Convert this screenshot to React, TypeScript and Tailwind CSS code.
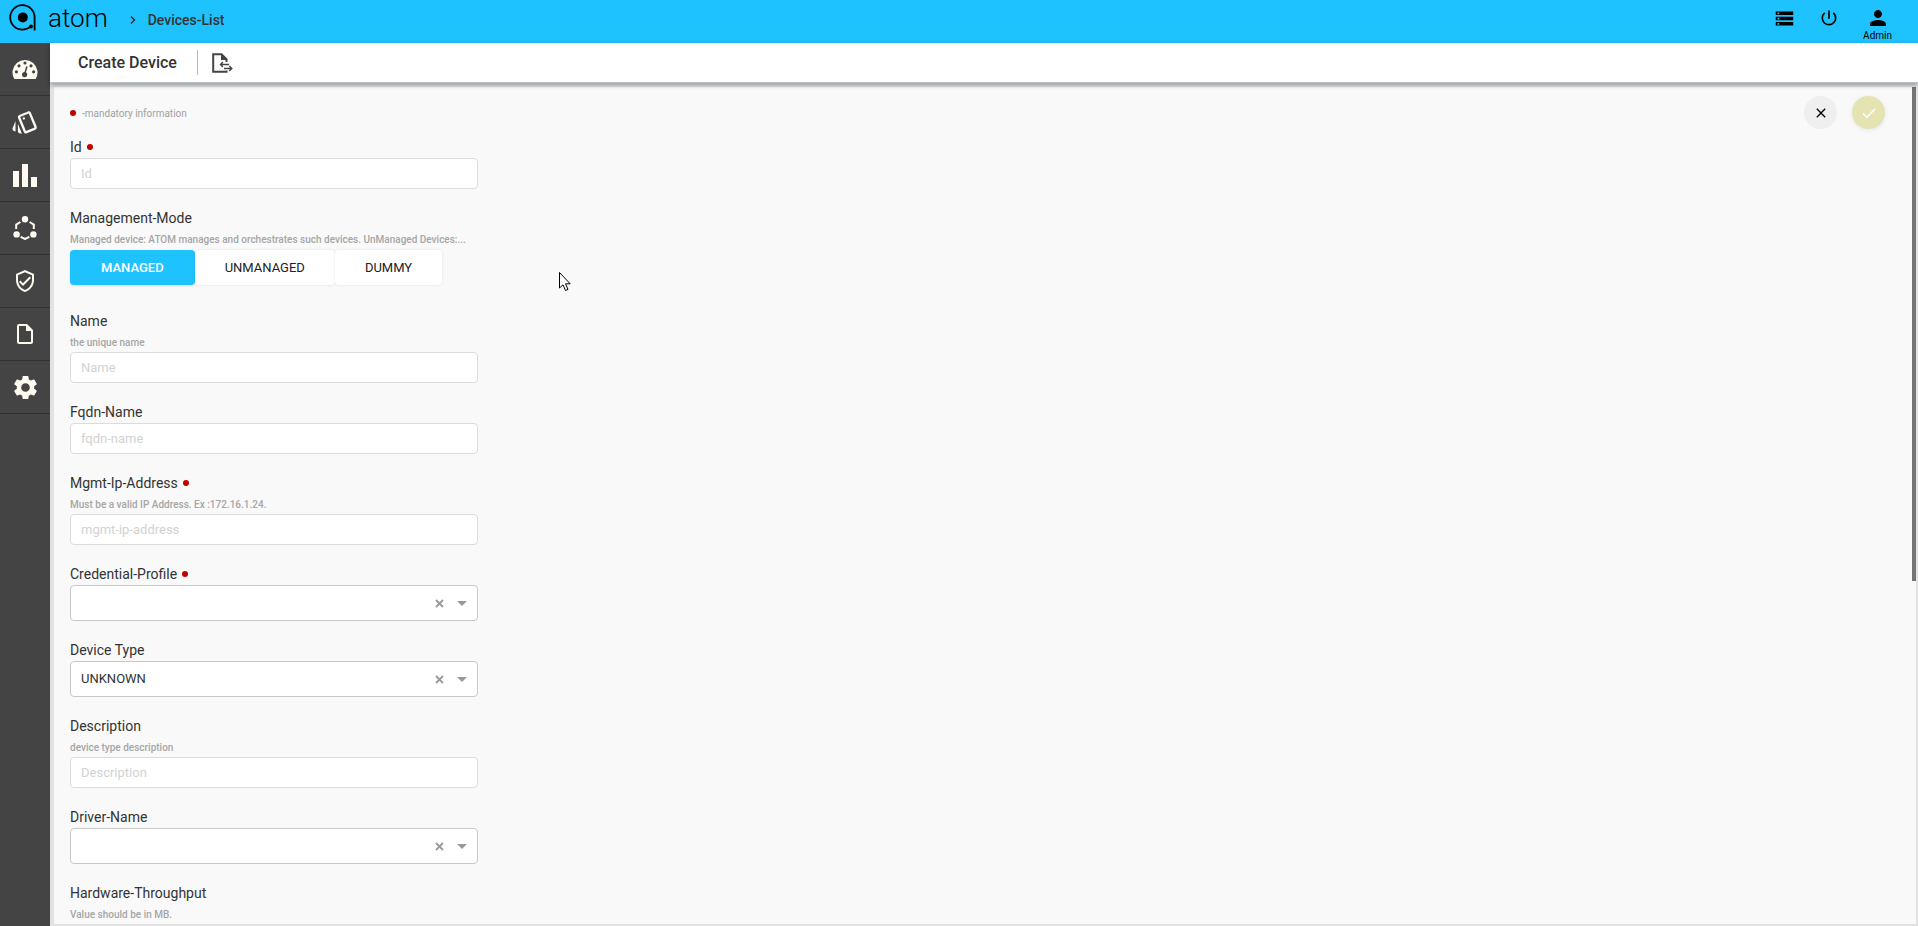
import { useState } from "react";
import type { ReactNode } from "react";
import {
    MdCheck,
    MdClose,
    MdOutlineInsertDriveFile,
    MdOutlineStyle,
    MdOutlineVerifiedUser,
    MdPerson,
    MdPowerSettingsNew,
    MdSettings,
    MdStorage,
} from "react-icons/md";

const Logo = () => (
    <svg width="28" height="28" viewBox="0 0 28 28" fill="none" aria-hidden="true">
        <path
            d="M25.6 13.2V26.4M25.6 13.2A12.2 12.2 0 1 0 13.4 25.6C17 25.6 19.4 24.6 21.8 22.4"
            stroke="#000"
            strokeWidth="1.8"
        />
        <circle cx="13.8" cy="13.4" r="5" fill="#000" />
        <circle cx="22" cy="22.6" r="2" fill="#000" />
    </svg>
);

const GaugeIcon = () => (
    <svg width="26" height="20" viewBox="0 0 26 20" aria-hidden="true">
        <path d="M2.4 20A12.5 12.5 0 1 1 23.6 20Z" fill="#fffaf0" />
        <g fill="#444">
            <circle cx="4.4" cy="12.8" r="1.6" />
            <circle cx="7" cy="6.8" r="1.6" />
            <circle cx="13" cy="4" r="1.6" />
            <circle cx="19" cy="6.8" r="1.6" />
            <circle cx="21.6" cy="12.8" r="1.6" />
            <circle cx="12.6" cy="15.6" r="2.6" />
        </g>
        <path d="M12.6 15L14.8 8" stroke="#444" strokeWidth="1.5" strokeLinecap="round" />
    </svg>
);

const BarsIcon = () => (
    <svg width="24" height="23" viewBox="0 0 24 23" fill="#fffaf0" aria-hidden="true">
        <path d="M0 7h6v16H0zM9 0h6v23H9zM18 13h6v10h-6z" />
    </svg>
);

const RingIcon = () => (
    <svg width="24" height="24" viewBox="0 0 24 24" aria-hidden="true">
        <g fill="#fffaf0">
            <circle cx="12" cy="3.2" r="3.2" />
            <circle cx="3.6" cy="18.4" r="3.2" />
            <circle cx="20.4" cy="18.4" r="3.2" />
        </g>
        <path
            d="M3.2 13V8.6L7.4 6M20.8 13V8.6L16.6 6M7.6 20.8L12 23L16.4 20.8"
            fill="none"
            stroke="#fffaf0"
            strokeWidth="2"
        />
    </svg>
);

const ExportIcon = () => (
    <svg width="21" height="21" viewBox="0 0 21 21" fill="none" aria-hidden="true">
        <path d="M14.5 17.5V18.8H1.2V1.2H9.5L14.5 6.2V9" stroke="#444" strokeWidth="2" />
        <path d="M9 0.5L15.5 7H9Z" fill="#444" />
        <path d="M9 11.5H17M10.8 9L8.5 11.5L10.8 14M12 15.5H19.5M17.2 13L19.8 15.5L17.2 18" stroke="#444" strokeWidth="1.4" />
    </svg>
);

const menu = [
    { name: "Dashboard", icon: <GaugeIcon /> },
    { name: "Resources", icon: <MdOutlineStyle size={28} /> },
    { name: "Reports", icon: <BarsIcon /> },
    { name: "Orchestration", icon: <RingIcon /> },
    { name: "Compliance", icon: <MdOutlineVerifiedUser size={24} /> },
    { name: "Documents", icon: <MdOutlineInsertDriveFile size={24} /> },
    { name: "Settings", icon: <MdSettings size={29} /> },
];

const Header = () => (
    <header className="flex h-[43px] shrink-0 items-center justify-between bg-[#1ec2ff] pr-[26px]">
        <div className="flex h-full items-center">
            <div className="flex items-center gap-[11px] pb-[7px] pl-[9px]">
                <Logo />
                <span className="text-[26px] leading-7 font-light text-black">atom</span>
            </div>
            <svg className="mt-[-4px] ml-[22px]" width="6" height="8" viewBox="0 0 6 8" aria-hidden="true">
                <path d="M1 0.5L4.5 4L1 7.5" fill="none" stroke="#222" strokeWidth="1.3" />
            </svg>
            <a href="#devices" className="ml-3 pb-1 text-sm leading-5 font-medium text-[#333]">
                Devices-List
            </a>
        </div>
        <div className="flex items-start gap-6 pt-1 text-black">
            <button type="button" aria-label="Servers" className="pt-[2px]">
                <MdStorage size={21} />
            </button>
            <button type="button" aria-label="Log out" className="pt-[2px]">
                <MdPowerSettingsNew size={20} />
            </button>
            <button type="button" className="flex flex-col items-center text-[10px] leading-3">
                <MdPerson size={24} />
                Admin
            </button>
        </div>
    </header>
);

const Sidebar = () => (
    <nav className="w-[50px] shrink-0 bg-[#444] text-[#fffaf0]">
        {menu.map((item) => (
            <a
                key={item.name}
                href="#menu"
                aria-label={item.name}
                className="flex h-[53px] items-center justify-center border-b border-[#303030]"
            >
                {item.icon}
            </a>
        ))}
    </nav>
);

const Dot = () => <span className="inline-block size-[6px] rounded-full bg-[#c00000]" />;

type FieldProps = {
    id: string;
    label: string;
    hint?: string;
    required?: boolean;
    children?: ReactNode;
};

const Field = ({ id, label, hint, required, children }: FieldProps) => (
    <div className="mb-[18px]">
        <label htmlFor={id} className="flex h-[22px] items-center gap-[5px] text-sm text-[#333]">
            {label}
            {required && <Dot />}
        </label>
        {hint && (
            <p className="h-5 text-[10px] leading-[22px] font-medium whitespace-nowrap text-[#a6a6a6]">{hint}</p>
        )}
        {children}
    </div>
);

const TextField = ({ placeholder, ...field }: FieldProps & { placeholder: string }) => (
    <Field {...field}>
        <input
            id={field.id}
            type="text"
            placeholder={placeholder}
            className="block h-[31px] w-full rounded border border-[#dcdcdc] bg-white px-[10px] text-[13px] text-[#333] placeholder:text-[#d2d2d2]"
        />
    </Field>
);

const SelectField = ({ value, ...field }: FieldProps & { value?: string }) => {
    const [current, setCurrent] = useState(value ?? "");

    return (
        <Field {...field}>
            <div className="relative">
                <select
                    id={field.id}
                    value={current}
                    onChange={(e) => setCurrent(e.target.value)}
                    className="block h-9 w-full appearance-none rounded border border-[#c8c8c8] bg-white px-[10px] text-[13px] text-[#333]"
                >
                    <option value=""></option>
                    {value && <option value={value}>{value}</option>}
                </select>
                <div className="pointer-events-none absolute inset-y-0 right-[11px] flex items-center gap-[13px]">
                    <button
                        type="button"
                        aria-label={`Clear ${field.label}`}
                        onClick={() => setCurrent("")}
                        className="pointer-events-auto"
                    >
                        <svg width="9" height="9" viewBox="0 0 9 9" aria-hidden="true">
                            <path d="M1 1L8 8M8 1L1 8" stroke="#999" strokeWidth="1.8" />
                        </svg>
                    </button>
                    <svg width="10" height="5" viewBox="0 0 10 5" aria-hidden="true">
                        <path d="M0 0H10L5 5Z" fill="#999" />
                    </svg>
                </div>
            </div>
        </Field>
    );
};

const modes = ["MANAGED", "UNMANAGED", "DUMMY"];

const ModeSwitch = () => {
    const [mode, setMode] = useState("MANAGED");

    return (
        <div id="mode" role="group" aria-label="Management-Mode" className="flex pt-px pb-[7px]">
            {modes.map((m) => (
                <button
                    key={m}
                    type="button"
                    aria-pressed={m === mode}
                    onClick={() => setMode(m)}
                    className={
                        m === mode
                            ? "h-[35px] rounded bg-[#1ec2ff] px-[31px] text-[13px] font-medium text-white shadow-sm"
                            : "h-[35px] rounded bg-white px-[30px] text-[13px] text-[#222] shadow-[0_0_3px_rgba(0,0,0,0.1)]"
                    }
                >
                    {m}
                </button>
            ))}
        </div>
    );
};

const DeviceForm = () => (
    <form className="w-[408px]">
        <p className="mb-3 flex h-[22px] items-center gap-[6px] text-[10px] text-[#a0a0a0]">
            <Dot />
            -mandatory information
        </p>
        <TextField id="id" label="Id" required placeholder="Id" />
        <Field
            id="mode"
            label="Management-Mode"
            hint="Managed device: ATOM manages and orchestrates such devices. UnManaged Devices:..."
        >
            <ModeSwitch />
        </Field>
        <TextField id="name" label="Name" hint="the unique name" placeholder="Name" />
        <TextField id="fqdn" label="Fqdn-Name" placeholder="fqdn-name" />
        <TextField
            id="ip"
            label="Mgmt-Ip-Address"
            required
            hint="Must be a valid IP Address. Ex :172.16.1.24."
            placeholder="mgmt-ip-address"
        />
        <SelectField id="credential" label="Credential-Profile" required />
        <SelectField id="type" label="Device Type" value="UNKNOWN" />
        <TextField id="description" label="Description" hint="device type description" placeholder="Description" />
        <SelectField id="driver" label="Driver-Name" />
        <TextField id="throughput" label="Hardware-Throughput" hint="Value should be in MB." placeholder="" />
    </form>
);

export default function App() {
    return (
        <div className="relative flex h-screen flex-col overflow-hidden font-['Roboto',sans-serif]">
            <Header />
            <div className="flex min-h-0 flex-1">
                <Sidebar />
                <div className="flex min-w-0 flex-1 flex-col bg-[#e2e2e2]">
                    <div className="z-10 flex h-10 shrink-0 items-center border-b border-[#b4c4ca] bg-white pl-7 shadow-[0_2px_5px_rgba(0,0,0,0.35)]">
                        <h1 className="text-base font-medium text-[#333]">Create Device</h1>
                        <div className="ml-5 h-[25px] w-px bg-[#bbb]" />
                        <button type="button" aria-label="Export" className="mt-[2px] ml-[14px]">
                            <ExportIcon />
                        </button>
                    </div>
                    <main className="mt-1 mr-[2px] mb-[2px] ml-1 flex min-h-0 flex-1 items-start justify-between overflow-hidden bg-[#f9f9f9] pl-4">
                        <div className="pt-[15px]">
                            <DeviceForm />
                        </div>
                        <div className="flex h-full items-start">
                            <div className="mt-[9px] mr-[27px] flex gap-[15px]">
                                <button
                                    type="button"
                                    aria-label="Cancel"
                                    className="flex size-[33px] items-center justify-center rounded-full bg-[#efefef] text-black"
                                >
                                    <MdClose size={16} />
                                </button>
                                <button
                                    type="button"
                                    aria-label="Save"
                                    className="flex size-[33px] items-center justify-center rounded-full bg-[#e6e3b3] text-white shadow-[0_1px_5px_rgba(0,0,0,0.08)]"
                                >
                                    <MdCheck size={18} />
                                </button>
                            </div>
                            <div className="h-[59%] w-1 bg-[#737373]" />
                        </div>
                    </main>
                </div>
            </div>
            <svg className="absolute top-[271px] left-[558px]" width="14" height="21" viewBox="0 0 14 21" aria-hidden="true">
                <path
                    d="M1.5 1.5V17L5 13.8L7.5 19.5L10 18.4L7.5 12.8H12.2Z"
                    fill="#fff"
                    stroke="#000"
                    strokeWidth="1"
                />
            </svg>
        </div>
    );
}
